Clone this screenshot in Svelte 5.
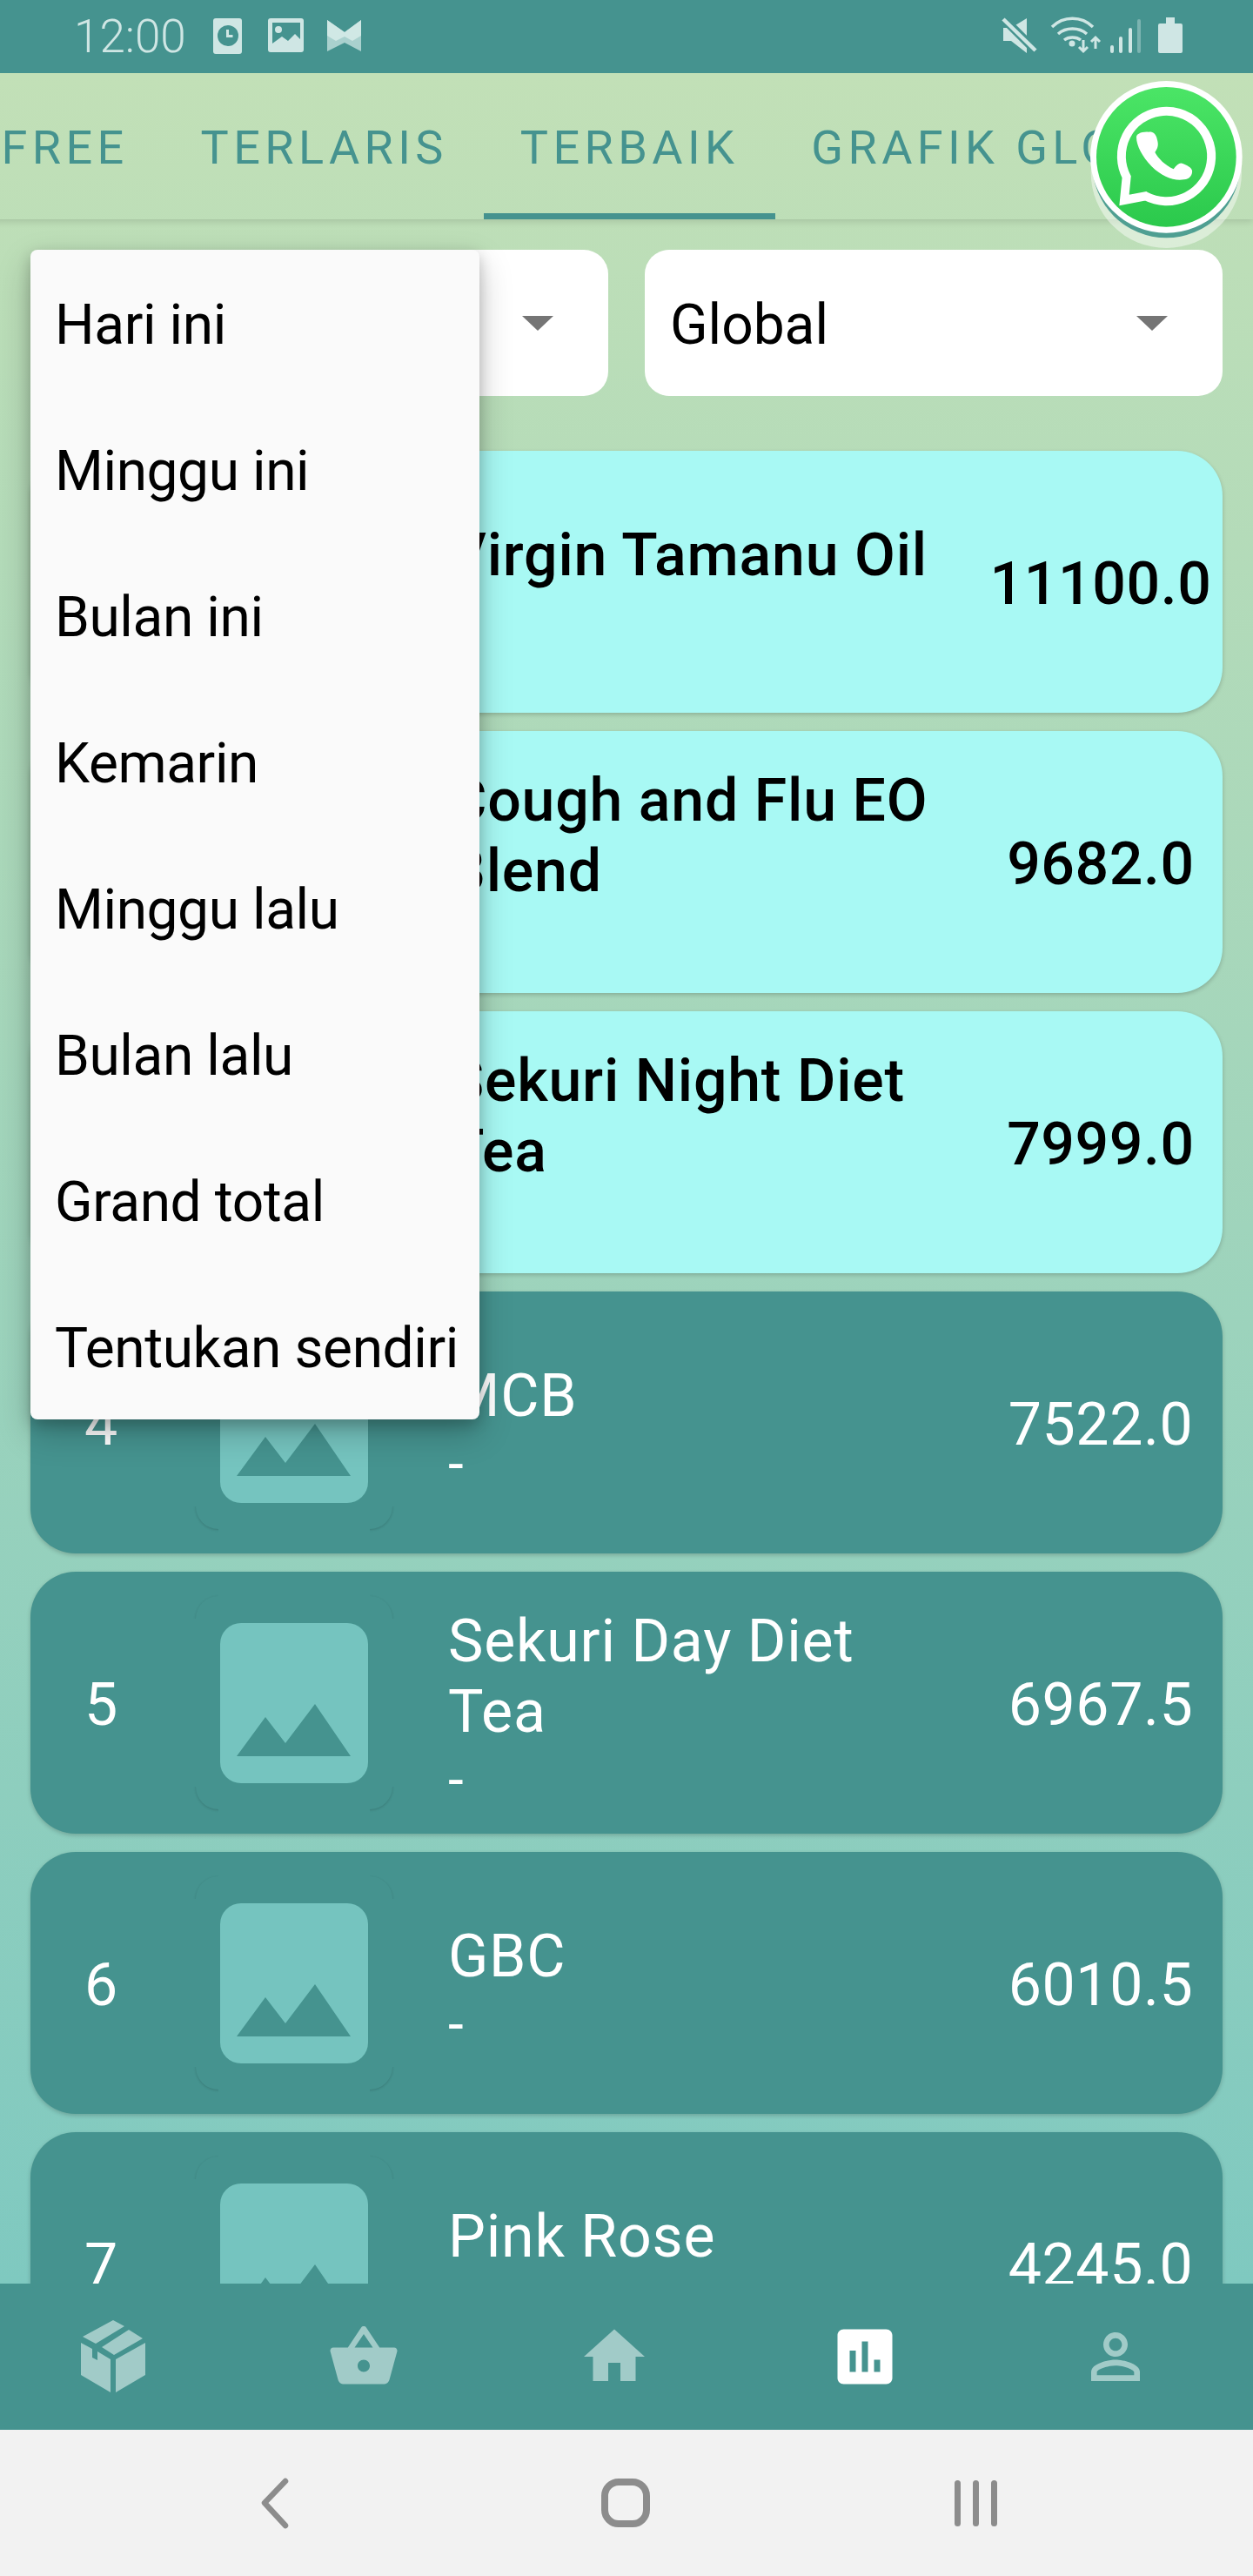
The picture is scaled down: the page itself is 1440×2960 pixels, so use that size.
<script>
  const tabs = ["FREE", "TERLARIS", "TERBAIK", "GRAFIK GLOBAL"];
  const periods = ["Hari ini", "Minggu ini", "Bulan ini", "Kemarin", "Minggu lalu", "Bulan lalu", "Grand total", "Tentukan sendiri"];
  const rows = [
    { rank: 1, name: "Virgin Tamanu Oil", value: "11100.0", top: true },
    { rank: 2, name: "Cough and Flu EO Blend", value: "9682.0", top: true },
    { rank: 3, name: "Sekuri Night Diet Tea", value: "7999.0", top: true },
    { rank: 4, name: "MCB", value: "7522.0" },
    { rank: 5, name: "Sekuri Day Diet Tea", value: "6967.5" },
    { rank: 6, name: "GBC", value: "6010.5" },
    { rank: 7, name: "Pink Rose", value: "4245.0" },
  ];
</script>

<div class="phone">
  <header class="status">
    <span class="time">12:00</span>
    <svg class="st-left" width="180" height="55" viewBox="240 15 180 55" aria-hidden="true">
      <rect x="245" y="22" width="33" height="41" rx="3" fill="#cfe6e4" />
      <circle cx="262" cy="42" r="12" fill="#45938f" />
      <path d="M261.500 35v7.500h6" fill="none" stroke="#cfe6e4" stroke-width="3" />
      <rect x="308" y="22" width="41" height="39" rx="3" fill="#cfe6e4" />
      <rect x="313" y="27" width="32" height="25" fill="#45938f" />
      <circle cx="320" cy="35" r="4" fill="#cfe6e4" />
      <path d="M313 52v-1l11-8 7 5 8-8 6 6v6z" fill="#cfe6e4" />
      <path d="M376 24L396 38L415 24V60L396 50L376 60z" fill="#a9d1ce" />
      <path d="M376 24L396 38L415 24V42L405 48L396 43L386 48L376 42z" fill="#d0e8e5" />
    </svg>
    <svg class="st-right" width="220" height="55" viewBox="1145 15 220 55" aria-hidden="true">
      <path d="M1153 33h9l18-11v40l-18-14h-9z" fill="#cfe6e4" />
      <path d="M1153 22l38 38" stroke="#45938f" stroke-width="10" />
      <path d="M1153 23l37 36" stroke="#cfe6e4" stroke-width="4.500" />
      <g fill="none" stroke="#cfe6e4" stroke-width="3.500">
        <path d="M1209 32c13-13 34-13 47 0" />
        <path d="M1216 40c9-8 24-8 33 0" />
        <path d="M1223 47c5-4 14-4 19 0" />
      </g>
      <circle cx="1232" cy="51" r="3.500" fill="#cfe6e4" />
      <path d="M1245 47v13m-5-5l5 5 5-5M1259 57v-13m-5 5l5-5 5 5" fill="none" stroke="#cfe6e4" stroke-width="3" />
      <rect x="1276" y="53" width="4" height="9" rx="2" fill="#cfe6e4" />
      <rect x="1286" y="43" width="4" height="19" rx="2" fill="#cfe6e4" />
      <rect x="1297" y="33" width="4" height="29" rx="2" fill="#cfe6e4" />
      <rect x="1307" y="23" width="4" height="39" rx="2" fill="#cfe6e4" opacity=".4" />
      <path d="M1340 21h10v7h7q2 0 2 2v30q0 2-2 2h-24q-2 0-2-2v-30q0-2 2-2h7z" fill="#cfe6e4" />
    </svg>
  </header>

  <main class="content">
    <nav class="tabs">
      {#each tabs as tab}
        <button type="button" class="tab" class:active={tab === "TERBAIK"}>{tab}</button>
      {/each}
    </nav>

    <section class="filters">
      <div class="select">
        <span>Hari ini</span>
        <i class="caret"></i>
      </div>
      <div class="select">
        <span>Global</span>
        <i class="caret"></i>
      </div>
    </section>

    <section class="list">
      {#each rows as row}
        <article class="card" class:top={row.top}>
          <span class="rank">{row.rank}</span>
          <div class="thumb">
            <div class="thumb-img">
              <svg width="170" height="184" viewBox="253 1864 170 184" aria-hidden="true">
                <path d="M272 2017l33-45 23 30 34-45 41 60z" fill="#45938f" />
              </svg>
            </div>
          </div>
          <div class="info">
            <div class="name">{row.name}</div>
            <div class="sub">-</div>
          </div>
          <span class="value">{row.value}</span>
        </article>
      {/each}
    </section>

    <ul class="menu">
      {#each periods as period}
        <li>{period}</li>
      {/each}
    </ul>
  </main>

  <nav class="bottom">
    <svg width="84" height="84" viewBox="88 2666 84 84" aria-hidden="true">
      <path d="M130 2666l13 7-33 20-15-8zM148 2677l16 10-33 19-14-9zM93 2692l13 7v10l6 3v-10l15 9v38l-34-20zM133 2711l34-19v37l-34 20z" fill="#a1cbc8" />
    </svg>
    <svg width="84" height="84" viewBox="0 0 24 24" aria-hidden="true">
      <path d="M17.21 9l-4.380-6.560c-.19-.28-.51-.42-.83-.42-.32 0-.64.14-.83.43L6.790 9H2c-.55 0-1 .45-1 1 0 .09.01.18.04.27l2.540 9.270c.23.84 1 1.460 1.920 1.460h13c.92 0 1.690-.62 1.930-1.460l2.540-9.270L23 10c0-.55-.45-1-1-1h-4.790zM9 9l3-4.400L15 9H9zm3 8c-1.100 0-2-.9-2-2s.9-2 2-2 2 .9 2 2-.9 2-2 2z" fill="#a1cbc8" />
    </svg>
    <svg width="84" height="84" viewBox="0 0 24 24" aria-hidden="true">
      <path d="M10 20v-6h4v6h5v-8h3L12 3 2 12h3v8z" fill="#a1cbc8" />
    </svg>
    <svg width="84" height="84" viewBox="0 0 24 24" aria-hidden="true">
      <path d="M19 3H5c-1.100 0-2 .9-2 2v14c0 1.100.9 2 2 2h14c1.100 0 2-.9 2-2V5c0-1.100-.9-2-2-2zM9 17H7v-7h2v7zm4 0h-2V7h2v10zm4 0h-2v-4h2v4z" fill="#fff" />
    </svg>
    <svg width="84" height="84" viewBox="0 0 24 24" aria-hidden="true">
      <path d="M12 5.900c1.160 0 2.100.94 2.100 2.100s-.94 2.100-2.100 2.100S9.900 9.160 9.900 8s.94-2.100 2.100-2.100m0 9c2.970 0 6.100 1.460 6.100 2.100v1.100H5.900V17c0-.64 3.130-2.100 6.100-2.100M12 4C9.790 4 8 5.790 8 8s1.790 4 4 4 4-1.790 4-4-1.790-4-4-4zm0 9c-2.670 0-8 1.340-8 4v3h16v-3c0-2.660-5.330-4-8-4z" fill="#a1cbc8" />
    </svg>
  </nav>

  <footer class="android">
    <svg width="40" height="60" viewBox="0 0 40 60" aria-hidden="true">
      <path d="M32 5L8 30l24 26" fill="none" stroke="#8c8c8c" stroke-width="6.500" stroke-linecap="round" stroke-linejoin="round" />
    </svg>
    <div class="home-btn"></div>
    <div class="recents"><i></i><i></i><i></i></div>
  </footer>

  <svg class="wa" width="220" height="240" viewBox="0 0 660 720" aria-hidden="true">
    <defs>
      <linearGradient id="wa-green" x1="0" y1="0" x2="0" y2="1">
        <stop offset="0" stop-color="#4be566" />
        <stop offset="1" stop-color="#2bc94c" />
      </linearGradient>
    </defs>
    <circle cx="361" cy="415" r="260" fill="#fff" opacity=".45" />
    <circle cx="361" cy="385" r="255" fill="#4f9f92" />
    <circle cx="361" cy="361" r="262" fill="#fff" />
    <circle cx="361" cy="361" r="241" fill="url(#wa-green)" />
    <path d="M224 430A155 155 0 1 1 290 496L216 510z" fill="none" stroke="#fff" stroke-width="30" stroke-linejoin="miter" />
    <path d="M300 275c14-2 24 6 28 20 4 16 10 28-6 50 12 22 34 44 64 58 14-18 22-24 34-18 14 6 26 12 30 22 2 16-8 30-28 32-34 6-76-10-112-46-32-34-52-72-52-100 0-10 16-20 42-18z" fill="#fff" />
  </svg>
</div>

<style>
  :global(body) {
    margin: 0;
  }

  .phone {
    position: relative;
    display: flex;
    flex-direction: column;
    width: 1440px;
    height: 2960px;
    overflow: hidden;
    font-family: "Roboto", "Noto Sans", sans-serif;
  }

  .status {
    position: relative;
    flex: none;
    display: flex;
    align-items: center;
    height: 84px;
    padding-left: 85px;
    background: #45938f;
    color: #cfe6e4;
  }

  .time {
    font-size: 53px;
    font-weight: 300;
  }

  .st-left {
    margin-left: 26px;
    margin-top: -1px;
  }

  .st-right {
    margin-left: auto;
    margin-right: 75px;
    margin-top: -1px;
  }

  .content {
    position: relative;
    flex: 1;
    min-height: 0;
    overflow: hidden;
    background: linear-gradient(#c2e0b7, #7fc9c0);
  }

  .tabs {
    position: relative;
    display: flex;
    height: 168px;
    margin-left: -40px;
    box-shadow: 0 2px 8px rgba(0, 0, 0, 0.14);
    white-space: nowrap;
  }

  .tab {
    flex: none;
    box-sizing: border-box;
    height: 168px;
    padding: 10px 41.5px 0;
    border: 0;
    border-bottom: 7px solid transparent;
    background: transparent;
    color: #45938f;
    font: inherit;
    font-size: 54px;
    letter-spacing: 5.4px;
  }

  .tab.active {
    border-bottom-color: #45938f;
  }

  .filters {
    display: flex;
    gap: 42px;
    padding: 35px 35px 0;
  }

  .select {
    flex: 1;
    display: flex;
    align-items: center;
    justify-content: space-between;
    height: 168px;
    padding: 0 63px 0 29px;
    border-radius: 28px;
    background: #fff;
    color: #000;
    font-size: 64px;
  }

  .select span {
    padding-top: 4px;
  }

  .caret {
    width: 0;
    height: 0;
    border-top: 17px solid #757575;
    border-right: 18px solid transparent;
    border-left: 18px solid transparent;
  }

  .list {
    display: flex;
    flex-direction: column;
    gap: 21px;
    padding: 63px 35px 0;
  }

  .card {
    flex: none;
    display: flex;
    align-items: center;
    height: 301px;
    border-radius: 52px;
    background: #45938f;
    color: #fff;
    box-shadow: 0 2px 5px rgba(0, 0, 0, 0.2);
    font-size: 68px;
  }

  .card.top {
    background: #a8f9f4;
    color: #000;
    font-weight: 500;
  }

  .rank {
    flex: none;
    width: 162px;
    margin-right: 28px;
    padding-top: 4px;
    text-align: center;
  }

  .thumb {
    position: relative;
    flex: none;
    display: flex;
    align-items: center;
    justify-content: center;
    width: 226px;
    height: 245px;
    border-radius: 26px;
    box-shadow: 0 1px 3px rgba(0, 0, 0, 0.16);
  }

  /* only the corners of the outer card show */
  .thumb::before,
  .thumb::after {
    position: absolute;
    background: #45938f;
    content: "";
  }

  .thumb::before {
    inset: 26px -4px;
  }

  .thumb::after {
    inset: -4px 26px;
  }

  .thumb-img {
    position: relative;
    z-index: 1;
    width: 170px;
    height: 184px;
    overflow: hidden;
    border-radius: 24px;
    background: #75c4bf;
  }

  .thumb-img svg {
    display: block;
  }

  .info {
    flex: none;
    width: 570px;
    margin-left: 64px;
    padding-top: 16px;
  }

  .name {
    line-height: 81px;
    letter-spacing: 0.8px;
  }

  .sub {
    line-height: 76px;
    font-size: 64px;
  }

  .value {
    flex: none;
    width: 280px;
    margin-left: 40px;
    padding-top: 4px;
    letter-spacing: 0.6px;
    text-align: center;
  }

  .menu {
    position: absolute;
    z-index: 2;
    top: 203px;
    left: 35px;
    width: 516px;
    margin: 0;
    padding: 0;
    border-radius: 8px;
    background: #fafafa;
    color: #000;
    box-shadow: 0 16px 38px rgba(0, 0, 0, 0.22), 0 6px 16px rgba(0, 0, 0, 0.2);
    font-size: 64px;
    letter-spacing: -0.4px;
    list-style: none;
  }

  .menu li {
    display: flex;
    align-items: center;
    box-sizing: border-box;
    height: 168px;
    padding: 4px 0 0 28px;
    white-space: nowrap;
  }

  .bottom {
    flex: none;
    display: flex;
    align-items: center;
    justify-content: space-between;
    height: 168px;
    padding: 0 116px 0 88px;
    background: #45938f;
  }

  .android {
    flex: none;
    display: flex;
    align-items: center;
    height: 168px;
    padding-left: 296px;
    background: #f2f2f2;
  }

  .home-btn {
    width: 40px;
    height: 40px;
    margin-left: 355px;
    border: 8px solid #8c8c8c;
    border-radius: 20px;
  }

  .recents {
    display: flex;
    gap: 14px;
    margin-left: 350px;
  }

  .recents i {
    width: 7px;
    height: 53px;
    border-radius: 4px;
    background: #8c8c8c;
  }

  .wa {
    position: absolute;
    z-index: 3;
    top: 60px;
    left: 1220px;
  }
</style>
